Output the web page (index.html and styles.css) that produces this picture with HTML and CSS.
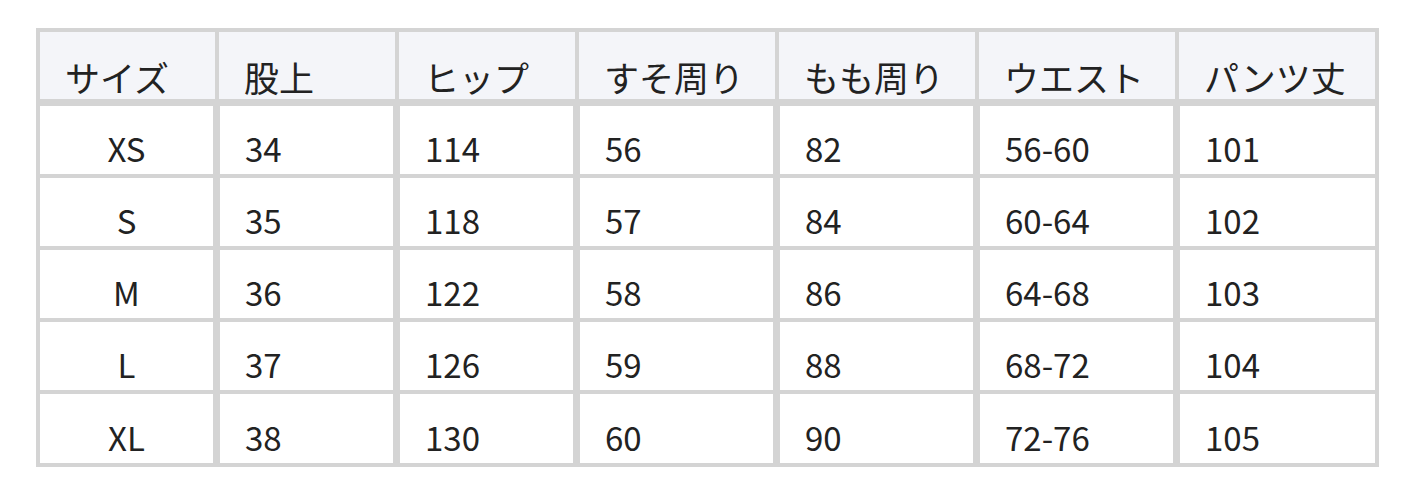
FILE: index.html
```html
<!DOCTYPE html>
<html lang="ja">
<head>
<meta charset="utf-8">
<title>サイズ表</title>
<link rel="stylesheet" href="styles.css">
</head>
<body>
<table class="size-table">
  <thead>
    <tr>
      <th class="c1">サイズ</th>
      <th class="c2">股上</th>
      <th class="c3">ヒップ</th>
      <th class="c4">すそ周り</th>
      <th class="c5">もも周り</th>
      <th class="c6">ウエスト</th>
      <th class="c7">パンツ丈</th>
    </tr>
  </thead>
  <tbody>
    <tr><td>XS</td><td>34</td><td>114</td><td>56</td><td>82</td><td>56-60</td><td>101</td></tr>
    <tr><td>S</td><td>35</td><td>118</td><td>57</td><td>84</td><td>60-64</td><td>102</td></tr>
    <tr><td>M</td><td>36</td><td>122</td><td>58</td><td>86</td><td>64-68</td><td>103</td></tr>
    <tr><td>L</td><td>37</td><td>126</td><td>59</td><td>88</td><td>68-72</td><td>104</td></tr>
    <tr><td>XL</td><td>38</td><td>130</td><td>60</td><td>90</td><td>72-76</td><td>105</td></tr>
  </tbody>
</table>
</body>
</html>
```

FILE: styles.css
```css
html, body {
  margin: 0;
  padding: 0;
  background: #ffffff;
}

body {
  padding: 28px 0 0 36px;
  font-family: "Noto Sans CJK JP", "Noto Sans", sans-serif;
  color: #222222;
}

.size-table {
  table-layout: fixed;
  width: 1343px;
  border: 4px solid #d4d4d4;
  border-collapse: separate;
  border-spacing: 0;
  line-height: 32px;
}

.size-table th,
.size-table td {
  box-sizing: border-box;
  padding: 0 0 0 25px;
  text-align: left;
  font-weight: 400;
  vertical-align: bottom;
  white-space: nowrap;
}

.size-table th {
  font-size: 35px;
  background: #f4f5f9;
  height: 74px;
  border-left: 2px solid #d4d4d4;
  border-right: 2px solid #d4d4d4;
  border-bottom: 7px solid #d4d4d4;
  padding-bottom: 6px;
}

.size-table td {
  font-size: 33px;
  height: 72px;
  border-left: 3px solid #d4d4d4;
  border-right: 4px solid #d4d4d4;
  border-bottom: 4px solid #d4d4d4;
  padding-bottom: 10px;
}

.size-table tr > :first-child {
  border-left: 0;
}

.size-table tr > :last-child {
  border-right: 0;
}

.size-table tbody tr:last-child td {
  border-bottom: 0;
  height: 69px;
}

.size-table td:first-child {
  text-align: center;
  padding-left: 0;
}

.c1 { width: 177px; }
.c2 { width: 180px; }
.c3 { width: 180px; }
.c4 { width: 200px; }
.c5 { width: 200px; }
.c6 { width: 200px; }
.c7 { width: 198px; }
```
